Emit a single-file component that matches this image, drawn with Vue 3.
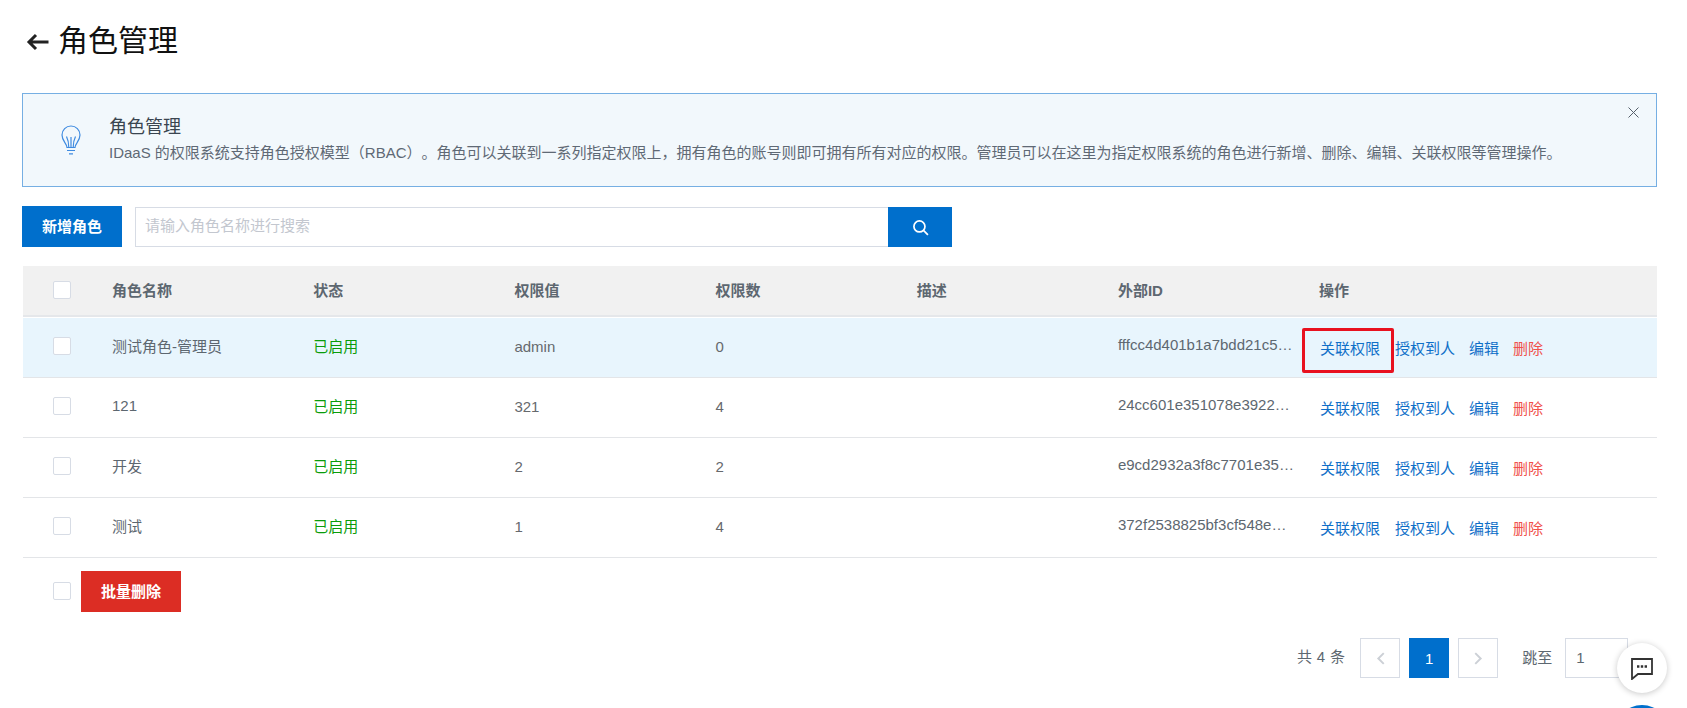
<script setup>
const columns = ['角色名称', '状态', '权限值', '权限数', '描述', '外部ID', '操作']
const rows = [
  { name: '测试角色-管理员', value: 'admin', count: '0', id: 'fffcc4d401b1a7bdd21c5…', active: true },
  { name: '121', value: '321', count: '4', id: '24cc601e351078e3922…' },
  { name: '开发', value: '2', count: '2', id: 'e9cd2932a3f8c7701e35…' },
  { name: '测试', value: '1', count: '4', id: '372f2538825bf3cf548e…' },
]
</script>

<template>
  <div class="page">
    <header class="title">
      <svg class="back" viewBox="0 0 23 18" width="23" height="18"><path d="M22.500 9H3M10 2 3 9l7 7" fill="none" stroke="#222" stroke-width="3"/></svg>
      <h1>角色管理</h1>
    </header>

    <section class="notice">
      <svg class="bulb" viewBox="0 0 20 30" width="20" height="30" fill="none" stroke="#3f8be0" stroke-width="1.200">
        <path d="M6 22.500c0-4-5-6.500-5-12.500C1 5 5 1 10 1s9 4 9 9c0 6-5 8.500-5 12.500z"/>
        <path d="M7.800 22.500c0-5-.8-8-2.300-11M12.200 22.500c0-5 .8-8 2.300-11M10 22.500V12"/>
        <path d="M6 25.500h8M8 28.800h4"/>
      </svg>
      <div class="notice-body">
        <div class="notice-title">角色管理</div>
        <p>IDaaS 的权限系统支持角色授权模型（RBAC）。角色可以关联到一系列指定权限上，拥有角色的账号则即可拥有所有对应的权限。管理员可以在这里为指定权限系统的角色进行新增、删除、编辑、关联权限等管理操作。</p>
      </div>
      <svg class="close" viewBox="0 0 11 11" width="11" height="11"><path d="M.5.500l10 10M10.500.500l-10 10" stroke="#56606b" fill="none"/></svg>
    </section>

    <div class="toolbar">
      <button class="btn primary">新增角色</button>
      <div class="search">
        <div class="input">请输入角色名称进行搜索</div>
        <button class="search-btn" aria-label="搜索">
          <svg viewBox="0 0 16 16" width="17" height="17" fill="none" stroke="#fff" stroke-width="1.600"><circle cx="7" cy="7" r="5.200"/><path d="M10.800 10.800 15 15"/></svg>
        </button>
      </div>
    </div>

    <div class="table">
      <div class="row head">
        <div class="cell check"><span class="box"></span></div>
        <div v-for="c in columns" :key="c" class="cell">{{ c }}</div>
      </div>
      <div v-for="r in rows" :key="r.name" class="row" :class="{ active: r.active }">
        <div class="cell check"><span class="box"></span></div>
        <div class="cell">{{ r.name }}</div>
        <div class="cell on">已启用</div>
        <div class="cell num">{{ r.value }}</div>
        <div class="cell num">{{ r.count }}</div>
        <div class="cell"></div>
        <div class="cell id">{{ r.id }}</div>
        <div class="cell actions">
          <a class="link first" :class="{ marked: r.active }">关联权限</a>
          <a class="link">授权到人</a>
          <a class="link">编辑</a>
          <a class="link danger">删除</a>
        </div>
      </div>
    </div>

    <div class="batch">
      <span class="box"></span>
      <button class="btn red">批量删除</button>
    </div>

    <footer class="pager">
      <span class="total">共 4 条</span>
      <span class="pg"><svg viewBox="0 0 8 12" width="9" height="13"><path d="M7 1 2 6l5 5" fill="none" stroke="#ccd0d6" stroke-width="1.800"/></svg></span>
      <span class="pg current">1</span>
      <span class="pg"><svg viewBox="0 0 8 12" width="9" height="13"><path d="m1 1 5 5-5 5" fill="none" stroke="#ccd0d6" stroke-width="1.800"/></svg></span>
      <span class="jump">跳至</span>
      <span class="jump-input">1</span>
    </footer>

    <button class="chat" aria-label="客服">
      <svg viewBox="0 0 24 23" width="24" height="23" fill="none" stroke="#333" stroke-width="1.800"><path d="M2 2h20v15H8l-6 5z"/><path d="M7 9.500h2.400M10.800 9.500h2.400M14.600 9.500H17" stroke-width="2.600"/></svg>
    </button>
    <div class="orb"></div>
  </div>
</template>

<style>
html, body { margin: 0; background: #fff; overflow: hidden; }
</style>

<style scoped>
.page {
  position: relative;
  width: 1687px;
  height: 708px;
  overflow: hidden;
  padding: 21px 30px 0 22px;
  box-sizing: border-box;
  font-family: "Liberation Sans", "Noto Sans CJK SC", sans-serif;
  font-size: 15px;
  color: #5d6770;
}
.title { display: flex; align-items: center; gap: 9px; height: 40px; padding-left: 4px; }
.title h1 { margin: 0; font-size: 30px; font-weight: 400; color: #111; line-height: 40px; }
.back { display: block; margin-top: 2px; }
.notice {
  position: relative;
  display: flex;
  align-items: center;
  height: 94px;
  margin-top: 32px;
  box-sizing: border-box;
  border: 1px solid #76afe3;
  background: #f2f8fc;
  padding: 0 0 0 38px;
}
.bulb { margin-right: 28px; }
.notice-body { margin-top: -2px; }
.notice-title { font-size: 18px; line-height: 24px; color: #3a4550; }
.notice p { margin: 3px 0 0; font-size: 15px; line-height: 22px; color: #5f6975; white-space: nowrap; text-spacing-trim: space-all; }
.close { position: absolute; right: 17px; top: 13px; }
.toolbar { display: flex; align-items: flex-end; gap: 13px; margin-top: 19px; height: 41px; }
.btn { border: 0; padding: 0 0 2px; width: 100px; height: 41px; color: #fff; font: inherit; font-weight: 700; }
.primary { background: #006fcc; }
.search { display: flex; width: 817px; height: 40px; }
.input {
  flex: 1;
  box-sizing: border-box;
  border: 1px solid #d7dce5;
  border-right: 0;
  padding-left: 9px;
  line-height: 36px;
  color: #c3c7cf;
}
.search-btn { width: 64px; border: 0; padding: 0; background: #006fcc; display: flex; align-items: center; justify-content: center; }
.table { margin: 19px 0 0 1px; }
.row {
  display: grid;
  grid-template-columns: 89px repeat(5, 201.2px) 201px 1fr;
  height: 60px;
  padding-bottom: 5px;
  align-items: center;
  border-bottom: 1px solid #e3e5e8;
  box-sizing: border-box;
}
.head { height: 51px; margin-bottom: 1px; padding-bottom: 3px; background: #f1f1f1; font-weight: 700; border-bottom: 2px solid #e5e7ea; }
.active { background: #e8f5fd; }
.cell { min-width: 0; white-space: nowrap; }
.check { padding-left: 30px; display: flex; margin-top: 2px; }
.box {
  display: block;
  flex: none;
  width: 18px;
  height: 18px;
  box-sizing: border-box;
  background: #fff;
  border: 1px solid #d7dce5;
  border-radius: 2px;
}
.on { color: #0a9c0a; }
.num { margin-top: 2px; color: #66696d; }
.id { margin-top: -2px; }
.actions { display: flex; align-items: center; margin-left: -17px; margin-top: 4px; }
.link { color: #0f6fc8; margin-right: 14px; }
.link.first { position: relative; box-sizing: border-box; width: 92px; padding-left: 18px; margin-right: 1px; }
.link.marked::after {
  content: "";
  position: absolute;
  left: 0;
  right: 0;
  top: calc(50% - 19px);
  height: 45px;
  box-sizing: border-box;
  border: 3px solid #e8111f;
  border-radius: 2px;
}
.danger { color: #f0504a; }
.batch { display: flex; align-items: center; gap: 10px; margin: 13px 0 0 31px; }
.batch .box { margin-top: -1px; }
.red { width: 100px; background: #dc2d24; }
.pager { display: flex; align-items: center; margin: 26px 0 0 1275px; height: 40px; }
.total { letter-spacing: .3px; margin-right: 15px; padding-bottom: 5px; }
.pg {
  width: 40px; height: 40px;
  box-sizing: border-box;
  border: 1px solid #d7dce5;
  margin-right: 9px;
  display: flex; align-items: center; justify-content: center;
  color: #fff;
}
.current { background: #006fcc; border: 0; }
.jump { margin-left: 15px; margin-right: 13px; padding-bottom: 4px; }
.jump-input { box-sizing: border-box; width: 63px; height: 40px; border: 1px solid #d7dce5; padding-left: 10px; line-height: 38px; flex: none; }
.chat {
  position: absolute; left: 1617px; top: 643px;
  width: 50px; height: 50px; border-radius: 50%;
  background: #fff; border: 0; padding: 0;
  box-shadow: 0 1px 6px rgba(0,0,0,.22);
  display: flex; align-items: center; justify-content: center;
}
.orb { position: absolute; left: 1614px; top: 705px; width: 56px; height: 56px; border-radius: 50%; background: #0070cc; }
</style>
